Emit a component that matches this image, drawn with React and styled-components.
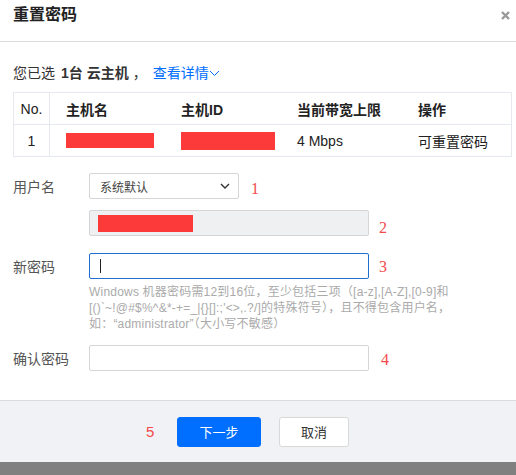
import React from 'react';
import styled, { createGlobalStyle } from 'styled-components';

const GlobalStyle = createGlobalStyle`
    body {
        margin: 0;
        background: #808080;
        font-family: "Liberation Sans", "Noto Sans CJK SC", sans-serif;
    }
`

const Modal = styled.div`
    width: 516px;
    height: 462px;
    background: #fff;
    display: flex;
    flex-direction: column;
`

const Header = styled.div`
    height: 42px;
    box-sizing: border-box;
    border-bottom: 1px solid #dcdcdc;
    display: flex;
    align-items: flex-start;
    justify-content: space-between;
    padding: 4px 6px 0 13px;
`

const Title = styled.div`
    font-size: 16px;
    font-weight: bold;
    line-height: 22px;
    color: #222;
`

const Close = styled.div`
    margin-top: 7px;
    width: 9px;
    height: 9px;

    svg {
        display: block;
    }
`

const Body = styled.div`
    flex: 1;
    padding: 21px 4px 0 13px;
`

const Summary = styled.div`
    font-size: 14px;
    line-height: 20px;
    color: #333;
    display: flex;
    align-items: center;

    b {
        margin: 0 4px 0 6px;
    }
`

const Link = styled.span`
    color: #006eff;
    margin-left: 6px;
    display: inline-flex;
    align-items: center;
`

const Table = styled.div`
    margin-top: 9px;
    border: 1px solid #e5e9ef;
    width: 499px;
    box-sizing: border-box;
`

const Row = styled.div`
    display: flex;
    height: 31px;
    align-items: stretch;
    border-top: ${p => (p.$first ? 'none' : '1px solid #e5e9ef')};
    font-size: 14px;
    font-weight: ${p => (p.$head ? 'bold' : 'normal')};
    color: #222;
`

const Cell = styled.div`
    width: ${p => p.$w}px;
    flex: ${p => (p.$w ? 'none' : 1)};
    display: flex;
    align-items: center;
    padding-left: ${p => (p.$center ? 0 : 16)}px;
    justify-content: ${p => (p.$center ? 'center' : 'flex-start')};
    box-sizing: border-box;
    border-right: ${p => (p.$divider ? '1px solid #e5e9ef' : 'none')};
    font-weight: ${p => (p.$center ? 'normal' : 'inherit')};
`

const Redact = styled.div`
    width: ${p => p.$w}px;
    height: ${p => p.$h}px;
    background: #fc3a3a;
`

const FormRow = styled.div`
    display: flex;
    align-items: center;
    margin-top: ${p => p.$mt}px;
`

const Label = styled.div`
    width: 76px;
    font-size: 14px;
    color: #555;
`

const Select = styled.div`
    width: 150px;
    height: 26px;
    box-sizing: border-box;
    border: 1px solid #d5d5d5;
    border-radius: 2px;
    display: flex;
    align-items: center;
    justify-content: space-between;
    padding: 0 8px 0 10px;
    font-size: 12px;
    color: #444;
`

const Input = styled.div`
    width: 280px;
    height: 26px;
    box-sizing: border-box;
    border: 1px solid ${p => (p.$focus ? '#1f6fd0' : '#d5d5d5')};
    background: ${p => (p.$disabled ? '#eef0f2' : '#fff')};
    border-radius: 2px;
    display: flex;
    align-items: center;
    padding-left: ${p => (p.$disabled ? 8 : 10)}px;
`

const Caret = styled.div`
    width: 1px;
    height: 14px;
    background: #222;
`

const Marker = styled.div`
    color: #f34a4a;
    font-family: "Liberation Serif", serif;
    font-size: 16px;
    margin-left: ${p => p.$ml}px;
    transform: translateY(${p => p.$dy}px);
`

const Hint = styled.div`
    margin: 5px 0 0 76px;
    font-size: 12px;
    line-height: 16px;
    letter-spacing: 0.2px;
    color: #aaa;
    white-space: nowrap;
`

const Footer = styled.div`
    height: 61px;
    border-top: 1px solid #d9dde3;
    background: #f0f2f5;
    display: flex;
    align-items: center;
    padding-left: 146px;
`

const Step = styled.div`
    color: #f34a4a;
    font-size: 15px;
    width: 31px;
`

const Button = styled.div`
    width: ${p => p.$w}px;
    height: 30px;
    box-sizing: border-box;
    border-radius: 3px;
    display: flex;
    align-items: center;
    justify-content: center;
    font-size: 13px;
    margin-right: 18px;
    background: ${p => (p.$primary ? '#006eff' : '#fff')};
    color: ${p => (p.$primary ? '#fff' : '#333')};
    border: 1px solid ${p => (p.$primary ? '#006eff' : '#d9d9d9')};
`

function App() {
    return (
        <>
            <GlobalStyle />
            <Modal>
                <Header>
                    <Title>重置密码</Title>
                    <Close>
                        <svg width="9" height="9" viewBox="0 0 9 9">
                            <path d="M1 1L8 8M8 1L1 8" stroke="#999" strokeWidth="2.4" />
                        </svg>
                    </Close>
                </Header>
                <Body>
                    <Summary>
                        您已选<b>1台 云主机</b>，
                        <Link>
                            查看详情
                            <svg width="11" height="8" viewBox="0 0 11 8">
                                <path d="M1 2L5.5 6.5L10 2" stroke="#006eff" strokeWidth="1" fill="none" />
                            </svg>
                        </Link>
                    </Summary>
                    <Table>
                        <Row $first $head>
                            <Cell $w={36} $center $divider>No.</Cell>
                            <Cell $w={115}>主机名</Cell>
                            <Cell $w={116}>主机ID</Cell>
                            <Cell $w={121}>当前带宽上限</Cell>
                            <Cell>操作</Cell>
                        </Row>
                        <Row>
                            <Cell $w={36} $center $divider>1</Cell>
                            <Cell $w={115}><Redact $w={88} $h={15} /></Cell>
                            <Cell $w={116}><Redact $w={94} $h={18} /></Cell>
                            <Cell $w={121}>4 Mbps</Cell>
                            <Cell>可重置密码</Cell>
                        </Row>
                    </Table>
                    <FormRow $mt={16}>
                        <Label>用户名</Label>
                        <Select>
                            系统默认
                            <svg width="10" height="6" viewBox="0 0 10 6">
                                <path d="M1 1L5 5L9 1" stroke="#333" strokeWidth="1.4" fill="none" />
                            </svg>
                        </Select>
                        <Marker $ml={12} $dy={3}>1</Marker>
                    </FormRow>
                    <FormRow $mt={11}>
                        <Label />
                        <Input $disabled>
                            <Redact $w={95} $h={17} />
                        </Input>
                        <Marker $ml={10} $dy={5}>2</Marker>
                    </FormRow>
                    <FormRow $mt={17}>
                        <Label>新密码</Label>
                        <Input $focus>
                            <Caret />
                        </Input>
                        <Marker $ml={10} $dy={1}>3</Marker>
                    </FormRow>
                    <Hint>
                        Windows 机器密码需12到16位，至少包括三项（[a-z],[A-Z],[0-9]和<br />
                        [()`~!@#$%^&amp;*-+=_|{'{}'}[]:;'&lt;&gt;,.?/]的特殊符号），且不得包含用户名，<br />
                        如：“administrator”（大小写不敏感）
                    </Hint>
                    <FormRow $mt={13}>
                        <Label>确认密码</Label>
                        <Input />
                        <Marker $ml={12} $dy={2}>4</Marker>
                    </FormRow>
                </Body>
                <Footer>
                    <Step>5</Step>
                    <Button $primary $w={84}>下一步</Button>
                    <Button $w={70}>取消</Button>
                </Footer>
            </Modal>
        </>
    );
}

export default App;
